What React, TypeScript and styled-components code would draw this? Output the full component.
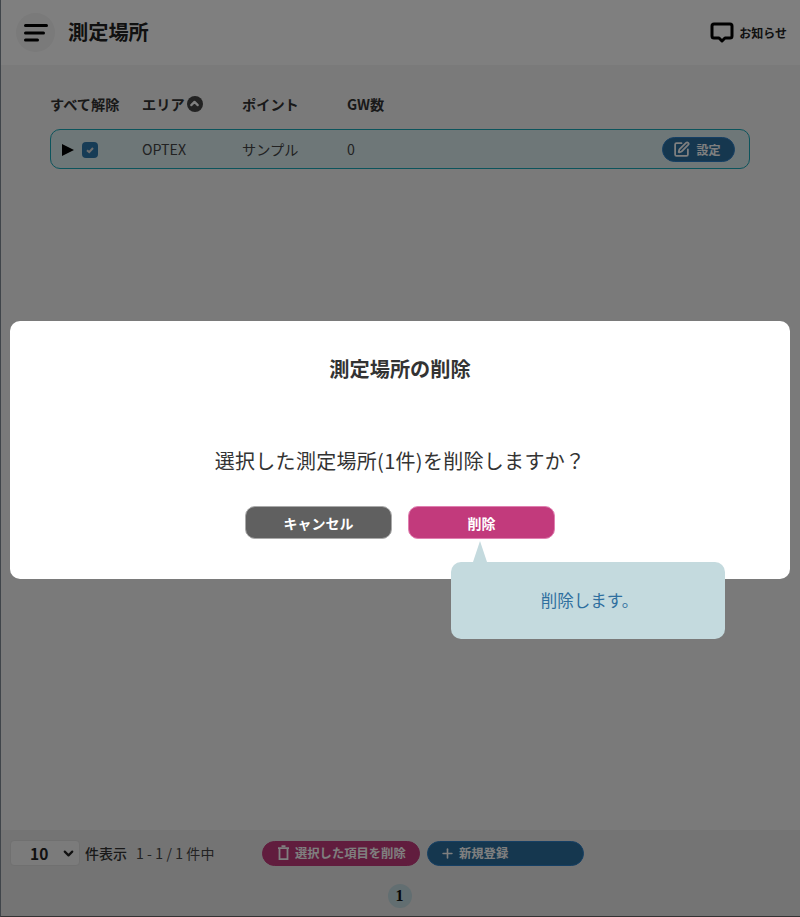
import React from "react";
import styled, { createGlobalStyle } from "styled-components";
import { ChevronDown, ChevronUp, Plus, SquarePen } from "lucide-react";

const Global = createGlobalStyle`
  html, body { margin: 0; padding: 0; height: 100%; }
  body { font-family: "Noto Sans CJK JP", "Noto Sans", sans-serif; color: #333; background: #fff; }
  #root { height: 100%; }
  * { box-sizing: border-box; }
`;

const Page = styled.div`
  position: relative; width: 800px; height: 917px; display: flex; flex-direction: column;
  border-left: 1px solid #40454a; border-bottom: 1px solid #333; background: #f4f4f4; overflow: hidden;
`;
const Header = styled.header`
  height: 65px; flex: none; background: #fff; display: flex; align-items: center;
  padding: 0 13px 0 15px;
`;
const MenuBadge = styled.div`
  width: 39px; height: 39px; border-radius: 50%; background: #f4f4f4; display: flex;
  align-items: center; justify-content: center; margin-right: 13px;
`;
const Title = styled.h1`
  margin: 0; flex: 1; font-size: 20.2px; font-weight: 700; color: #222; line-height: 1;
`;
const Notice = styled.div`
  display: flex; align-items: center; gap: 5px; font-size: 12px; font-weight: 700; color: #222;
`;
const Content = styled.main`
  flex: 1; padding: 26px 49px 0 49px;
`;
const Columns = styled.div`
  display: grid; grid-template-columns: 92px 100px 105px 1fr; height: 25px; align-items: center;
  padding-left: 1px; margin-left: -1px;
  font-size: 14.2px; font-weight: 700; color: #333; margin-bottom: 13px;
`;
const Sortable = styled.span`
  display: flex; align-items: center; gap: 2px;
`;
const SortIcon = styled.span`
  width: 16px; height: 16px; border-radius: 50%; background: #444; color: #fff; display: flex;
  align-items: center; justify-content: center;
`;
const Row = styled.div`
  width: 700px; height: 40px; border: 1px solid #18a8b8; border-radius: 10px; background: #dceef1;
  display: grid; grid-template-columns: 91px 100px 105px 1fr auto; align-items: center;
  font-size: 14.2px; color: #444; padding-right: 14px;
`;
const Controls = styled.div`
  display: flex; align-items: center; gap: 8px; padding: 2px 0 0 11px;
`;
const Arrow = styled.span`
  width: 0; height: 0; border-left: 12px solid #000; border-top: 6.5px solid transparent;
  border-bottom: 6.5px solid transparent;
`;
const Check = styled.span`
  width: 16px; height: 16px; border-radius: 4px; background: #2f78ac; display: flex;
  align-items: center; justify-content: center;
`;
const SettingsButton = styled.button`
  width: 73px; height: 25px; border-radius: 13px; border: 1px solid #2b7fc8; background: #2a6f9f;
  color: #fff; font: 700 12px "Noto Sans CJK JP", sans-serif; display: flex; align-items: center;
  justify-content: center; gap: 6px; padding: 0 3px 0 0;
`;
const Footer = styled.footer`
  height: 86px; flex: none; background: #e8e8e8; padding: 10px 9px 0 9px; display: flex; flex-direction: column;
`;
const FooterBar = styled.div`
  display: flex; align-items: center; height: 26px;
`;
const Select = styled.div`
  width: 70px; height: 26px; border-radius: 4px; background: #f6f6f6; border: 1px solid #e0e0e0;
  display: flex; align-items: center; justify-content: space-between; padding: 0 3px 0 19px;
  font-size: 15.5px; font-weight: 700; color: #222; margin-right: 5px;
`;
const CountLabel = styled.span`
  font-size: 14px; font-weight: 500; color: #333; margin-right: 9px;
`;
const CountRange = styled.span`
  font-size: 14px; color: #444; width: 126px; flex: none; letter-spacing: 0.1px;
`;
const PillButton = styled.button<{ $bg: string; $edge: string; $w: number; $pad: number }>`
  width: ${p => p.$w}px; height: 25px; border-radius: 13px; background: ${p => p.$bg};
  border: 1px solid ${p => p.$edge}; color: #fff; font: 700 12.3px "Noto Sans CJK JP", sans-serif;
  display: flex; align-items: center; justify-content: flex-start; gap: 4px; padding: 0 0 0 ${p => p.$pad}px;
  margin-right: 7px;
`;
const Pager = styled.div`
  display: flex; justify-content: center; margin-top: 18px; padding-right: 2px;
`;
const PageDot = styled.span`
  width: 24px; height: 24px; border-radius: 50%; background: #c4dce2; color: #111; display: flex;
  align-items: center; justify-content: center; font: 700 16px "Liberation Serif", serif;
`;
const Overlay = styled.div`
  position: absolute; inset: 0; background: rgba(0, 0, 0, 0.5);
`;
const Modal = styled.section`
  position: absolute; left: 9px; top: 321px; width: 780px; height: 258px; background: #fff;
  border-radius: 10px; display: flex; flex-direction: column; align-items: center; padding-top: 33px;
`;
const ModalTitle = styled.h2`
  margin: 0; font-size: 20.2px; font-weight: 700; line-height: 30px; color: #333;
`;
const ModalMessage = styled.p`
  margin: 62px 0 0 0; font-size: 20px; line-height: 30px; color: #333; letter-spacing: 0.3px;
`;
const ModalActions = styled.div`
  display: flex; gap: 16px; margin-top: 30px;
`;
const ModalButton = styled.button<{ $bg: string; $edge: string }>`
  width: 147px; height: 33px; border-radius: 10px; background: ${p => p.$bg}; border: 1px solid ${p => p.$edge};
  color: #fff; font: 700 14px "Noto Sans CJK JP", sans-serif; padding: 0;
`;
const Tooltip = styled.div`
  position: absolute; left: 450px; top: 562px; width: 274px; height: 77px; border-radius: 10px;
  background: #c4dade; color: #2f6f9f; font-size: 16.5px; display: flex; align-items: center; justify-content: center;
  padding: 0 0 1px 3px;
  &::before {
    content: ""; position: absolute; left: 22px; top: -21px; width: 0; height: 0;
    border-left: 7px solid transparent; border-right: 7px solid transparent; border-bottom: 21px solid #c4dade;
  }
`;

export default function App() {
  return (
    <>
      <Global />
      <Page>
        <Header>
          <MenuBadge>
            <svg width="24" height="20" viewBox="0 0 24 20" fill="none" stroke="#000" strokeWidth="3" strokeLinecap="round">
              <path d="M1.5 2.5h21M1.5 10h18M1.5 17h12" />
            </svg>
          </MenuBadge>
          <Title>測定場所</Title>
          <Notice>
            <svg width="24" height="21" viewBox="0 0 24 21" fill="none" stroke="#000" strokeWidth="3" strokeLinejoin="round">
              <path d="M4 2h16a2 2 0 0 1 2 2v10a2 2 0 0 1-2 2h-5l-3 3-3-3H4a2 2 0 0 1-2-2V4a2 2 0 0 1 2-2z" />
            </svg>
            お知らせ
          </Notice>
        </Header>
        <Content>
          <Columns>
            <span>すべて解除</span>
            <Sortable>エリア<SortIcon><ChevronUp size={13} strokeWidth={4} /></SortIcon></Sortable>
            <span>ポイント</span>
            <span>GW数</span>
          </Columns>
          <Row>
            <Controls>
              <Arrow />
              <Check>
                <svg width="10" height="10" viewBox="0 0 10 10" fill="none" stroke="#ddd" strokeWidth="2">
                  <path d="M2 5.2 4.2 7.2 8 3" />
                </svg>
              </Check>
            </Controls>
            <span>OPTEX</span>
            <span>サンプル</span>
            <span>0</span>
            <SettingsButton><SquarePen size={17} strokeWidth={2.5} />設定</SettingsButton>
          </Row>
        </Content>
        <Footer>
          <FooterBar>
            <Select>10<ChevronDown size={15} strokeWidth={3.5} /></Select>
            <CountLabel>件表示</CountLabel>
            <CountRange>1 - 1 / 1 件中</CountRange>
            <PillButton $bg="#c23a7c" $edge="#c23a7c" $w={158} $pad={13}>
              <svg width="15" height="16" viewBox="0 0 15 16" fill="none" stroke="#fff" strokeWidth="1.8">
                <path d="M5.5 1.2h4M2 3.2h11M3.5 3.2v11h8v-11" />
              </svg>
              選択した項目を削除
            </PillButton>
            <PillButton $bg="#2a6f9f" $edge="#2b7fc8" $w={157} $pad={12}><Plus size={15} strokeWidth={2.6} />新規登録</PillButton>
          </FooterBar>
          <Pager><PageDot>1</PageDot></Pager>
        </Footer>
        <Overlay />
        <Modal>
          <ModalTitle>測定場所の削除</ModalTitle>
          <ModalMessage>選択した測定場所(1件)を削除しますか？</ModalMessage>
          <ModalActions>
            <ModalButton $bg="#606060" $edge="#aaa">キャンセル</ModalButton>
            <ModalButton $bg="#c23a7c" $edge="#e07fb0">削除</ModalButton>
          </ModalActions>
        </Modal>
        <Tooltip>削除します。</Tooltip>
      </Page>
    </>
  );
}
